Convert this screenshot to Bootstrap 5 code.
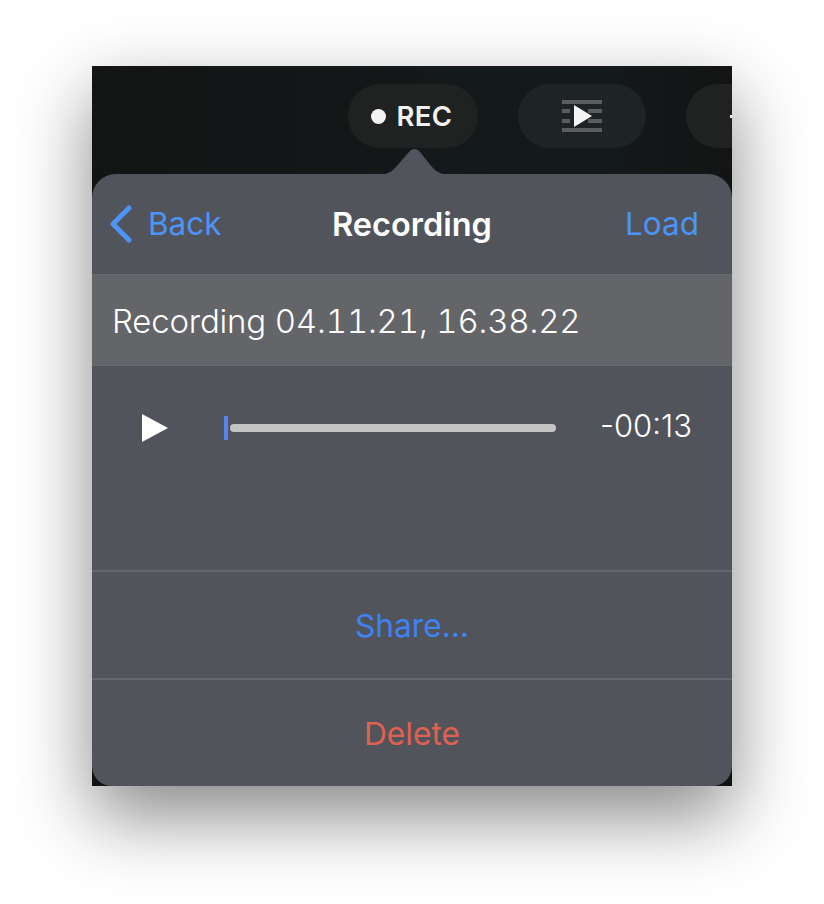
<!DOCTYPE html>
<html lang="en">
<head>
    <meta charset="UTF-8">
    <meta name="viewport" content="width=device-width, initial-scale=1.0">
    <title>Recording</title>
    <link href="https://cdn.jsdelivr.net/npm/bootstrap@5.3.0/dist/css/bootstrap.min.css" rel="stylesheet">
    <style>
        html, body { height: 904px; overflow: hidden; background: #fff; }
        body { font-family: "Inter", "Liberation Sans", sans-serif; padding: 66px 92px 0; }
        .app-window { width: 640px; height: 720px; background: #111314; box-shadow: 0 30px 70px rgba(0,0,0,.47); position: relative; overflow: hidden; }
        .top-strip { height: 108px; padding: 18px 0 0 256px; gap: 40px; background: linear-gradient(90deg, #131414, #141a1c 75%, #131414); }
        .pill { height: 64px; border-radius: 32px; background: #202221; flex-shrink: 0; }
        .pill-rec { width: 130px; color: #f2f2f2; font-size: 27.5px; font-weight: 600; letter-spacing: .4px; gap: 10px; padding-top: 2px; }
        .pill-rec i { width: 15px; height: 15px; border-radius: 50%; background: #f2f2f2; display: block; margin: -2px 0 0 -2px; }
        .pill-seq { width: 128px; background: #1e2326; }
        .pill-more { width: 90px; padding-left: 44px; }
        .pill-more i { width: 4px; height: 3px; background: #eee; display: block; }
        .popover-tip { position: absolute; left: 282px; top: 82px; width: 82px; height: 27px; }
        .sheet { height: 612px; background: #52545b; border-radius: 24px 24px 20px 20px; color: #fff; font-size: 32px; }
        .sheet-head { height: 100px; padding: 0 33px 0 17px; position: relative; }
        .sheet-head b { font-weight: 600; position: absolute; left: 0; right: 0; top: 30px; text-align: center; font-size: 32.5px; line-height: 42px; }
        .blue-link { color: #4c94f5; font-size: 31.5px; line-height: 42px; }
        .back-link { gap: 15px; }
        .rec-name { height: 92px; background: #646569; border-top: 1px solid #6b6c72; border-bottom: 1px solid #6b6c72; padding: 4px 0 0 20px; font-weight: 300; font-size: 33px; letter-spacing: -.2px; font-feature-settings: "tnum"; }
        .player { height: 204px; padding: 48px 40px 0 50px; }
        .track { width: 332px; height: 24px; margin: 2px 0 0 56px; position: relative; }
        .track i { display: block; width: 4px; height: 24px; background: #5884f0; }
        .track u { display: block; width: 326px; height: 8px; margin-left: 2px; border-radius: 4px; background: #c4c4c4; }
        .time-left { margin: -2px 0 0 auto; font-size: 31px; font-weight: 300; line-height: 28px; }
        .action-row { height: 108px; border-top: 2px solid #66676c; font-size: 31.7px; padding-top: 2px; }
        .share-text { color: #3f82f2; }
        .delete-text { color: #e0614f; }
    </style>
</head>
<body>
    <div class="app-window">
        <div class="top-strip d-flex">
            <div class="pill pill-rec d-flex align-items-center justify-content-center"><i></i><span>REC</span></div>
            <div class="pill pill-seq d-flex align-items-center justify-content-center">
                <svg width="40" height="32" viewBox="0 0 40 32">
                    <path fill="#5b5e61" d="M0 0h40v4H0zM0 28h40v4H0zM0 9h8v4H0zM0 19h8v4H0zM26 9h14v4H26zM26 19h14v4H26z"/>
                    <path fill="#f4f4f4" d="M12 5l18 11-18 11z"/>
                </svg>
            </div>
            <div class="pill pill-more d-flex align-items-center"><i></i></div>
        </div>
        <svg class="popover-tip" viewBox="0 0 82 27">
            <path fill="#52545b" d="M0 27c10 0 16-1 22-8L35 4c3-4 8-4 11 0l12 15c6 7 12 8 24 8z"/>
        </svg>
        <div class="sheet">
            <div class="sheet-head d-flex align-items-center justify-content-between">
                <b>Recording</b>
                <div class="back-link d-flex align-items-center blue-link">
                    <svg width="24" height="38" viewBox="0 0 24 38"><path fill="none" stroke="#4c94f5" stroke-width="5" stroke-linecap="round" stroke-linejoin="round" d="M20 3L4 19l16 16"/></svg>
                    <span>Back</span>
                </div>
                <span class="blue-link">Load</span>
            </div>
            <div class="rec-name d-flex align-items-center">Recording 04.11.21, 16.38.22</div>
            <div class="player d-flex align-items-start">
                <svg width="26" height="28" viewBox="0 0 26 28"><path fill="#fff" d="M0 0l26 14L0 28z"/></svg>
                <div class="track d-flex align-items-center"><i></i><u></u></div>
                <span class="time-left">-00:13</span>
            </div>
            <div class="action-row d-flex align-items-center justify-content-center share-text">Share...</div>
            <div class="action-row d-flex align-items-center justify-content-center delete-text">Delete</div>
        </div>
    </div>
    <script src="https://cdn.jsdelivr.net/npm/bootstrap@5.3.0/dist/js/bootstrap.bundle.min.js"></script>
</body>
</html>
